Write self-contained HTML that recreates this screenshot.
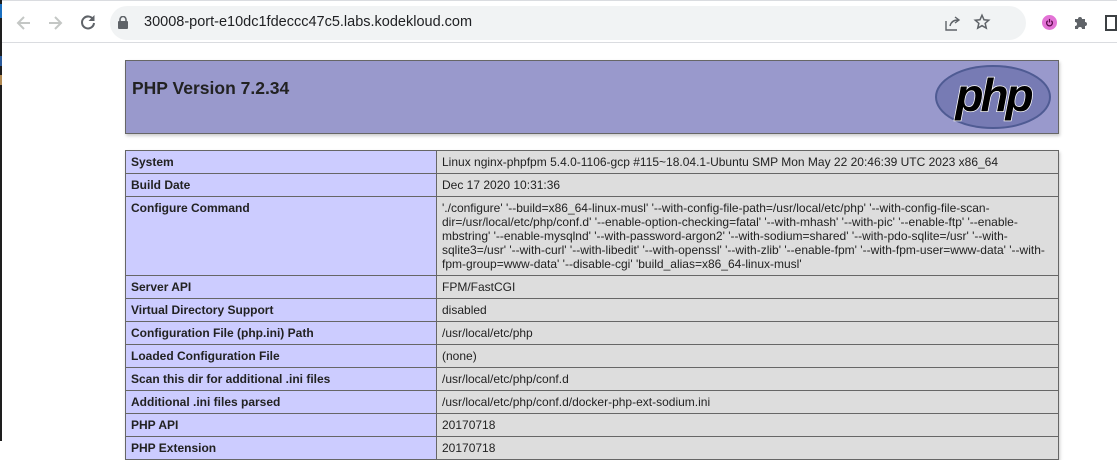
<!DOCTYPE html>
<html><head><meta charset="utf-8"><style>
*{margin:0;padding:0;box-sizing:border-box}
body{width:1117px;height:441px;overflow:hidden;background:#fff;font-family:"Liberation Sans",Arial,sans-serif;position:relative}
.bar{position:absolute;left:0;top:0;width:1117px;height:43px;background:#fff;border-bottom:1px solid #dadce0;border-top:1px solid #dadce0}
.omni{position:absolute;left:110px;top:5px;width:916px;height:34px;border-radius:17px;background:#f1f3f4}
.url{position:absolute;left:144px;top:13px;font-size:14.5px;color:#202124}
.hdr{position:absolute;left:125px;top:60px;width:934px;height:74px;background:#9999cc;border:1px solid #666;box-shadow:1px 2px 3px #ccc}
.hdr h1{position:absolute;left:6px;top:17px;font-size:17.5px;font-weight:bold;color:#222}
table{position:absolute;left:125px;top:150px;width:934px;border-collapse:collapse;font-size:12px;color:#222;box-shadow:1px 2px 3px #ccc}
td{border:1px solid #666;padding:4px 5px;line-height:14px;vertical-align:top;white-space:nowrap}
td.e{background:#ccccff;font-weight:bold;width:311px}
td.v{background:#ddd}
</style></head><body>
<div class="bar">
<svg style="position:absolute;left:14px;top:12px" width="20" height="20" viewBox="0 0 20 20"><path d="M16 10H5M10 4l-6 6 6 6" fill="none" stroke="#c4c7c5" stroke-width="2"/></svg>
<svg style="position:absolute;left:45px;top:12px" width="20" height="20" viewBox="0 0 20 20"><path d="M4 10h11M10 4l6 6-6 6" fill="none" stroke="#c4c7c5" stroke-width="2"/></svg>
<svg style="position:absolute;left:78px;top:11px" width="20" height="20" viewBox="0 0 20 20"><path d="M15.5 8A6 6 0 1 0 16 11" fill="none" stroke="#5f6368" stroke-width="2"/><path d="M16.5 3v6h-6z" fill="#5f6368"/></svg>
<div class="omni"></div>
<svg style="position:absolute;left:117px;top:15px" width="12" height="13" viewBox="0 0 12 13"><rect x="1" y="5" width="10" height="8" rx="1" fill="#5f6368"/><path d="M3 5V3.5a3 3 0 0 1 6 0V5" fill="none" stroke="#5f6368" stroke-width="1.6"/></svg>
<div class="url">30008-port-e10dc1fdeccc47c5.labs.kodekloud.com</div>
<svg style="position:absolute;left:944px;top:13px" width="18" height="18" viewBox="0 0 18 18"><path d="M2 7v9h11M6 12c1-4 4-6 8-6M11 3l4 3-4 3" fill="none" stroke="#5f6368" stroke-width="1.4"/></svg>
<svg style="position:absolute;left:973px;top:12px" width="18" height="18" viewBox="0 0 24 24"><path d="M12 3l2.7 6 6.3.6-4.8 4.2 1.5 6.4L12 16.9l-5.7 3.3 1.5-6.4L3 9.6 9.3 9z" fill="none" stroke="#5f6368" stroke-width="2"/></svg>
<div style="position:absolute;left:1042px;top:14px;width:15px;height:15px;border-radius:50%;background:#e373d6"></div>
<svg style="position:absolute;left:1045px;top:17px" width="9" height="9" viewBox="0 0 10 10"><path d="M3 3a3.2 3.2 0 1 0 4 0M5 1v4" fill="none" stroke="#5a0a4a" stroke-width="1.4"/></svg>
<svg style="position:absolute;left:1073px;top:13px" width="16" height="16" viewBox="0 0 16 16"><path d="M2 5h3a2 2 0 1 1 4 0h3v3a2 2 0 1 1 0 4v3H9a2 2 0 1 0-4 0H2v-3a2 2 0 1 0 0-4z" fill="#5f6368"/></svg>
<div style="position:absolute;left:1105px;top:14px;width:12px;height:16px;border:2px solid #3c4043"></div>
</div>
<div style="position:absolute;left:0;top:0;width:2px;height:441px;background:#1e1e1e"></div>
<div style="position:absolute;left:0;top:4px;width:2px;height:14px;background:#1a6fc0"></div>
<div style="position:absolute;left:0;top:56px;width:2px;height:10px;background:#2a5a9a"></div>
<div style="position:absolute;left:0;top:75px;width:2px;height:10px;background:#b08850"></div>
<div class="hdr"><h1>PHP Version 7.2.34</h1>
<svg style="position:absolute;left:804px;top:3px" width="126" height="66" viewBox="0 0 126 66">
<ellipse cx="63" cy="33" rx="57" ry="31" fill="#777bb4" stroke="#4f5b93" stroke-width="2"/>
<text x="63" y="47" text-anchor="middle" font-family="Liberation Sans,sans-serif" font-style="italic" font-weight="bold" font-size="46" letter-spacing="-3" fill="#000" stroke="#fff" stroke-width="1.5" paint-order="stroke">php</text>
</svg></div>
<table>
<tr><td class="e">System</td><td class="v">Linux nginx-phpfpm 5.4.0-1106-gcp #115~18.04.1-Ubuntu SMP Mon May 22 20:46:39 UTC 2023 x86_64</td></tr>
<tr><td class="e">Build Date</td><td class="v">Dec 17 2020 10:31:36</td></tr>
<tr><td class="e">Configure Command</td><td class="v">'./configure' '--build=x86_64-linux-musl' '--with-config-file-path=/usr/local/etc/php' '--with-config-file-scan-<br>dir=/usr/local/etc/php/conf.d' '--enable-option-checking=fatal' '--with-mhash' '--with-pic' '--enable-ftp' '--enable-<br>mbstring' '--enable-mysqlnd' '--with-password-argon2' '--with-sodium=shared' '--with-pdo-sqlite=/usr' '--with-<br>sqlite3=/usr' '--with-curl' '--with-libedit' '--with-openssl' '--with-zlib' '--enable-fpm' '--with-fpm-user=www-data' '--with-<br>fpm-group=www-data' '--disable-cgi' 'build_alias=x86_64-linux-musl'</td></tr>
<tr><td class="e">Server API</td><td class="v">FPM/FastCGI</td></tr>
<tr><td class="e">Virtual Directory Support</td><td class="v">disabled</td></tr>
<tr><td class="e">Configuration File (php.ini) Path</td><td class="v">/usr/local/etc/php</td></tr>
<tr><td class="e">Loaded Configuration File</td><td class="v">(none)</td></tr>
<tr><td class="e">Scan this dir for additional .ini files</td><td class="v">/usr/local/etc/php/conf.d</td></tr>
<tr><td class="e">Additional .ini files parsed</td><td class="v">/usr/local/etc/php/conf.d/docker-php-ext-sodium.ini</td></tr>
<tr><td class="e">PHP API</td><td class="v">20170718</td></tr>
<tr><td class="e">PHP Extension</td><td class="v">20170718</td></tr>
</table>
</body></html>
